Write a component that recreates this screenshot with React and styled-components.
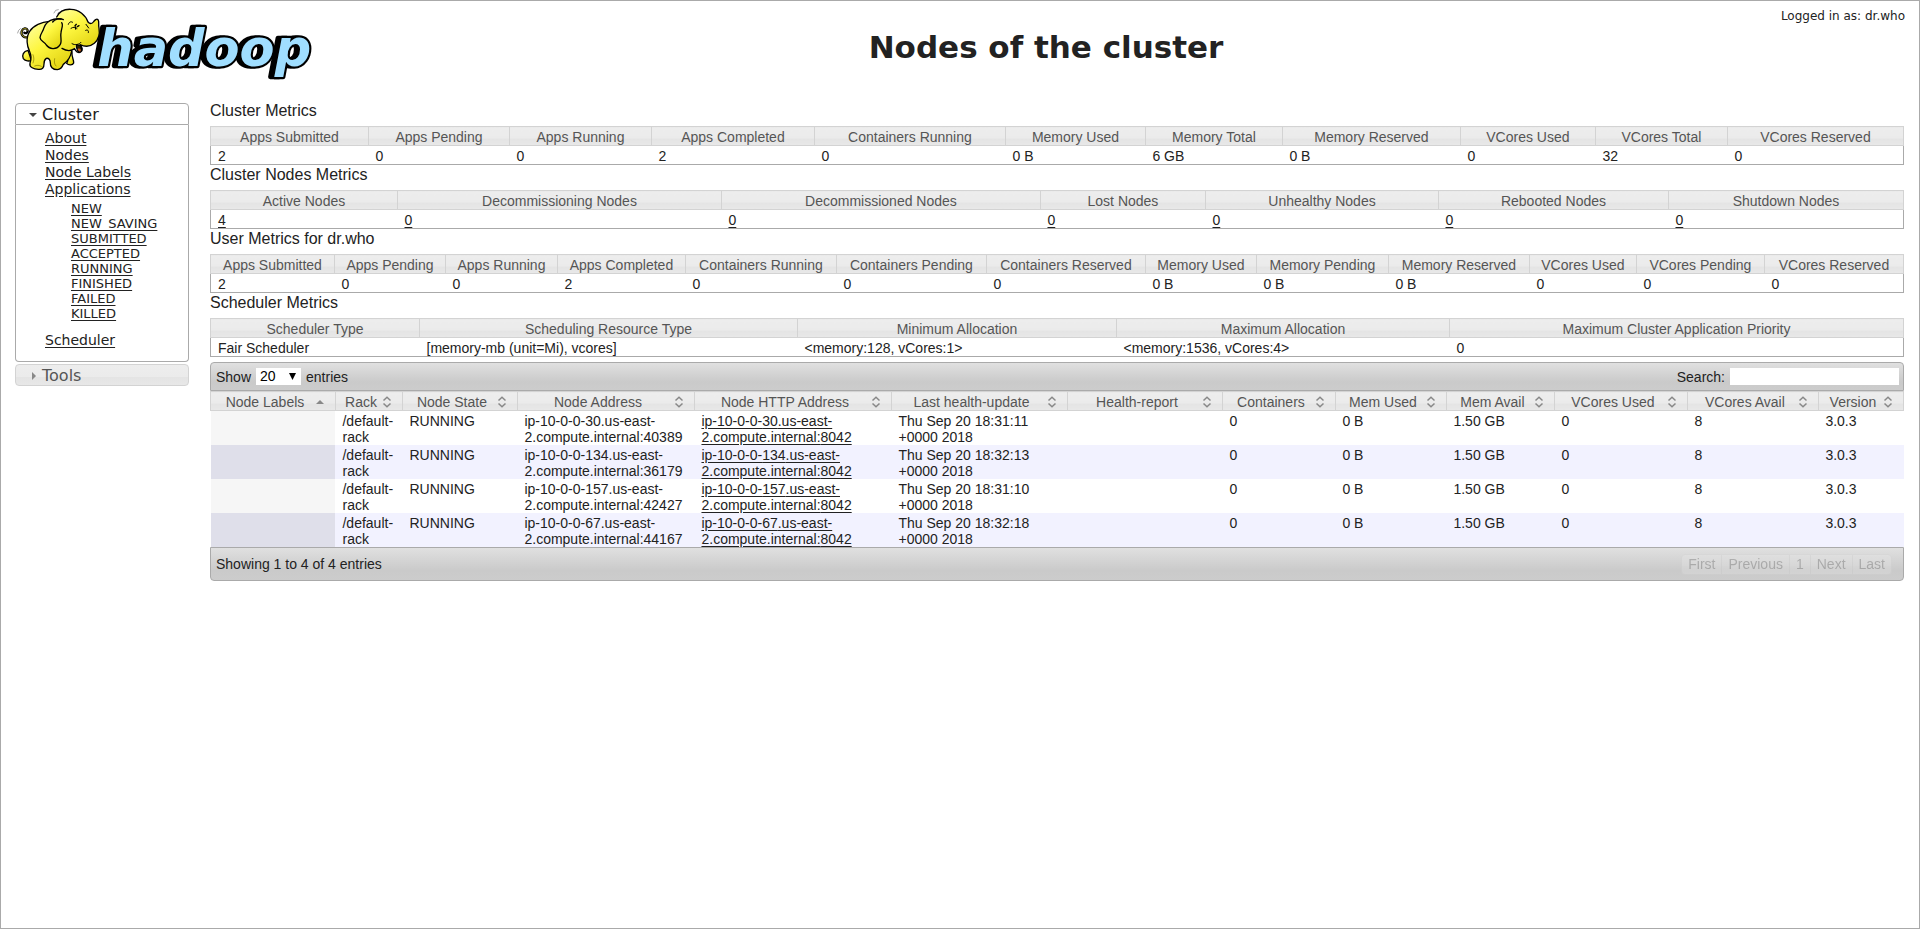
import React from "react";
import styled, { createGlobalStyle, css } from "styled-components";

const sans = `"Liberation Sans", Arial, sans-serif`;
const wide = `"DejaVu Sans", Verdana, sans-serif`;
const glass = "linear-gradient(#ededed 0%, #ebebeb 60%, #e4e4e4 61%, #e8e8e8 100%)";

const GlobalStyle = createGlobalStyle`
  * { box-sizing: border-box; }
  body { margin: 0; background: #fff; color: #222; font-family: ${sans}; font-size: 14px; line-height: 16px; }
  a { color: #222; text-underline-offset: 2px; }
  button, select, input { font: inherit; color: inherit; }
`;

const Page = styled.div`
  min-height: 100vh;
  border: 1px solid #aaa;
`;

const Header = styled.header`
  display: grid;
  grid-template-columns: 172px 1fr;
  padding: 7px 14px 0;
  height: 100px;
`;

const Logo = styled.svg`
  display: block;
  width: 300px;
  height: 76px;
`;

const Wordmark = styled.text`
  font: italic bold 153px ${wide};
  fill: #a0deff;
  stroke: #000;
  stroke-width: 13px;
  stroke-linejoin: round;
  paint-order: stroke;
  filter: drop-shadow(-12px 0 0 #000);
`;

const Banner = styled.div`
  display: flex;
  flex-direction: column;
`;

const LoginNote = styled.div`
  font: 12px/16px ${wide};
  text-align: right;
`;

const Title = styled.h1`
  margin: 4px 0 0;
  text-align: center;
  font: bold 31px/38px ${wide};
`;

const Main = styled.div`
  display: flex;
  align-items: flex-start;
  gap: 21px;
  padding: 0 15px 0 14px;
`;

const Sidebar = styled.nav`
  flex: 0 0 174px;
  padding-top: 2px;
  display: flex;
  flex-direction: column;
  font-family: ${wide};
`;

const SectionButton = styled.button`
  display: flex;
  align-items: center;
  gap: 4px;
  height: 22px;
  padding: 1px 0 0 12px;
  font-size: 16px;
  text-align: left;
  ${(p) =>
    p.$open
      ? css`
          border: 1px solid #aaa;
          border-radius: 4px 4px 0 0;
          background: #fff;
          color: #212121;
        `
      : css`
          margin-top: 2px;
          border: 1px solid #d3d3d3;
          border-radius: 4px;
          background: ${glass};
          color: #555;
        `}
`;

const SectionBody = styled.div`
  border: 1px solid #aaa;
  border-top: 0;
  border-radius: 0 0 4px 4px;
  padding: 5px 0 12px 29px;
`;

const NavList = styled.ul`
  list-style: none;
  margin: 0;
  padding: 0;
  font-size: 14px;
  line-height: 17px;
`;

const StateList = styled(NavList)`
  margin: 3px 0 11px;
  padding-left: 26px;
  font-size: 13px;
  line-height: 15px;
`;

const Content = styled.main`
  flex: 1;
  min-width: 0;
`;

const SectionTitle = styled.h2`
  margin: 0 0 6px;
  font-size: 16px;
  line-height: 19px;
  font-weight: normal;
`;

const Table = styled.table`
  width: 100%;
  table-layout: fixed;
  border-collapse: collapse;
  ${(p) => p.$framed && "border: 1px solid #aaa;"}
`;

const HeadCell = styled.th`
  height: 19px;
  padding: ${(p) => (p.$sortable ? 0 : "2px 0 0")};
  border: 1px solid #d3d3d3;
  background: ${glass};
  color: #555;
  font-weight: normal;
  line-height: 16px;
  white-space: nowrap;
`;

const MetricCell = styled.td`
  height: 19px;
  padding: 2px 7px 0;
  white-space: nowrap;
`;

const NodeCell = styled.td`
  padding: 2px 4px 0 7px;
  height: 34px;
  vertical-align: top;
`;

const NodeRow = styled.tr`
  background: ${(p) => (p.$even ? "#f2f2ff" : "#fff")};
  & > td:first-child {
    background: ${(p) => (p.$even ? "#dfdfea" : "#f6f6f6")};
  }
`;

const SortButton = styled.button`
  display: flex;
  align-items: center;
  width: 100%;
  height: 18px;
  padding: 2px 7px 0 7px;
  border: 0;
  background: none;
  white-space: nowrap;
  line-height: 16px;
`;

const SortLabel = styled.span`
  flex: 1;
  min-width: 0;
  text-align: center;
`;

const SortIcon = styled.svg`
  flex: 0 0 16px;
  height: 12px;
`;

const Bar = styled.div`
  display: flex;
  align-items: center;
  justify-content: space-between;
  border: 1px solid #aaa;
  background: linear-gradient(#e0e0e0, #cacaca 70%, #cccccc);
`;

const Toolbar = styled(Bar)`
  height: 29px;
  margin-top: 5px;
  padding: 0 4px 0 5px;
  border-radius: 4px 4px 0 0;
`;

const Footer = styled(Bar)`
  height: 34px;
  padding: 0 11px 0 5px;
  border-radius: 0 0 4px 4px;
`;

const Field = styled.label`
  display: flex;
  align-items: center;
  gap: 5px;
`;

const SelectBox = styled.span`
  position: relative;
  display: inline-flex;
`;

const Select = styled.select`
  appearance: none;
  width: 45px;
  height: 17px;
  padding: 0 4px;
  border: 0;
  border-radius: 0;
  background: #fff;
  color: #000;
  line-height: 17px;
`;

const SelectArrow = styled.svg`
  position: absolute;
  right: 5px;
  top: 5px;
  width: 7px;
  height: 7px;
  pointer-events: none;
`;

const SearchInput = styled.input`
  width: 169px;
  height: 17px;
  padding: 0 2px;
  border: 0;
`;

const Pager = styled.div`
  display: flex;
  opacity: 0.3;
`;

const PageButton = styled.button`
  height: 21px;
  padding: 0 6px;
  margin-right: -1px;
  border: 1px solid #d3d3d3;
  background: ${glass};
  color: #555;
  &:first-child { border-radius: 4px 0 0 4px; }
  &:last-child { border-radius: 0 4px 4px 0; margin-right: 0; }
`;

const Columns = ({ widths }) => {
  const total = widths.reduce((a, b) => a + b, 0);
  return (
    <colgroup>
      {widths.map((w, i) => (
        <col key={i} style={{ width: `${(w / total) * 100}%` }} />
      ))}
    </colgroup>
  );
};

const metrics = [
  {
    title: "Cluster Metrics",
    widths: [158, 141, 142, 163, 191, 140, 137, 178, 135, 132, 176],
    heads: ["Apps Submitted", "Apps Pending", "Apps Running", "Apps Completed", "Containers Running", "Memory Used", "Memory Total", "Memory Reserved", "VCores Used", "VCores Total", "VCores Reserved"],
    values: ["2", "0", "0", "2", "0", "0 B", "6 GB", "0 B", "0", "32", "0"],
  },
  {
    title: "Cluster Nodes Metrics",
    linked: true,
    widths: [187, 324, 319, 165, 233, 230, 235],
    heads: ["Active Nodes", "Decommissioning Nodes", "Decommissioned Nodes", "Lost Nodes", "Unhealthy Nodes", "Rebooted Nodes", "Shutdown Nodes"],
    values: ["4", "0", "0", "0", "0", "0", "0"],
  },
  {
    title: "User Metrics for dr.who",
    widths: [124, 111, 112, 128, 151, 150, 159, 111, 132, 141, 107, 128, 139],
    heads: ["Apps Submitted", "Apps Pending", "Apps Running", "Apps Completed", "Containers Running", "Containers Pending", "Containers Reserved", "Memory Used", "Memory Pending", "Memory Reserved", "VCores Used", "VCores Pending", "VCores Reserved"],
    values: ["2", "0", "0", "2", "0", "0", "0", "0 B", "0 B", "0 B", "0", "0", "0"],
  },
  {
    title: "Scheduler Metrics",
    widths: [209, 378, 319, 333, 454],
    heads: ["Scheduler Type", "Scheduling Resource Type", "Minimum Allocation", "Maximum Allocation", "Maximum Cluster Application Priority"],
    values: ["Fair Scheduler", "[memory-mb (unit=Mi), vcores]", "<memory:128, vCores:1>", "<memory:1536, vCores:4>", "0"],
  },
];

const nodeHeads = ["Node Labels", "Rack", "Node State", "Node Address", "Node HTTP Address", "Last health-update", "Health-report", "Containers", "Mem Used", "Mem Avail", "VCores Used", "VCores Avail", "Version"];
const nodeWidths = [125, 67, 115, 177, 197, 176, 155, 113, 111, 108, 133, 131, 85];

const nodes = [
  { ip: "30", port: "40389", time: "18:31:11" },
  { ip: "134", port: "36179", time: "18:32:13" },
  { ip: "157", port: "42427", time: "18:31:10" },
  { ip: "67", port: "44167", time: "18:32:18" },
];

const states = ["NEW", "NEW_SAVING", "SUBMITTED", "ACCEPTED", "RUNNING", "FINISHED", "FAILED", "KILLED"];

const Host = ({ ip, port }) => (
  <>
    ip-10-0-0-{ip}.us-east-
    <wbr />
    2.compute.internal:{port}
  </>
);

const HadoopLogo = () => (
  <Logo viewBox="45 24 900 228" role="img" aria-label="hadoop">
    <defs>
      <linearGradient id="hide" x1="0" y1="0" x2="0.7" y2="1">
        <stop offset="0" stopColor="#ffffa8" />
        <stop offset="0.5" stopColor="#fdf63f" />
        <stop offset="1" stopColor="#e2d312" />
      </linearGradient>
    </defs>
    <Wordmark x="292" y="197">hadoop</Wordmark>
    <g fill="url(#hide)" stroke="#000" strokeWidth="4" strokeLinecap="round" strokeLinejoin="round">
      <path d="M84 111C72 115 62 105 65 94C68 84 80 82 83 91C84 98 78 101 73 98" fill="none" strokeWidth="7" />
      <path d="M84 111C72 115 62 105 65 94C68 84 80 82 83 91" fill="none" stroke="#e8dc28" strokeWidth="2" />
      <path d="M84 151C70 154 65 166 70 176C76 184 88 184 94 181Z" />
      <path d="M200 176C207 180 202 186 200 190C206 197 218 196 221 189C222 178 214 172 216 155Z" />
      <path d="M148 64C125 66 100 77 89 94C76 114 82 140 88 152C94 165 95 176 90 190C87 202 102 207 115 208C127 209 132 204 132 192C132 184 134 178 139 175C146 174 151 179 151 188C150 200 158 209 172 209C184 208 187 201 190 193C200 186 212 172 215 153L210 80Z" />
      <path d="M227 133C230 140 229 151 237 156C246 156 249 147 241 136Z" fill="#2a1c00" />
      <path d="M170 51C178 34 196 27 213 28C237 29 257 45 264 66C269 72 276 72 280 66C284 60 290 55 294 59C299 67 294 73 297 84C300 103 297 118 283 130C270 141 253 140 240 134L228 131C228 138 227 143 224 146C214 153 199 153 186 145L160 90Z" stroke="none" />
      <path d="M170 51C178 34 196 27 213 28C237 29 257 45 264 66C269 72 276 72 280 66C284 60 290 55 294 59C299 67 294 73 297 84C300 103 297 118 283 130C270 141 253 140 240 134C246 143 250 151 242 156C235 161 226 153 224 146C214 153 199 153 186 145" fill="none" />
      <path d="M233 147C238 144 244 147 242 153C239 157 235 153 233 147Z" fill="#cb5d20" stroke="none" />
      <path d="M183 57C160 53 139 64 132 83C130 94 120 102 120 113C122 125 133 124 139 135C148 148 169 150 179 136C188 127 180 112 183 98C184 87 191 74 185 68" />
      <path d="M158 66C164 58 177 53 190 59" fill="none" />
      <path d="M205 73C207 66 213 63 218 67M213 85C219 81 226 80 231 85" fill="none" strokeWidth="3" />
      <path d="M225 77L229 73M232 80L237 77M227 87L226 81" strokeWidth="4" />
      <path d="M258 73L266 84M257 91C263 88 267 92 265 98M216 131C225 137 239 133 243 127" fill="none" strokeWidth="3" />
      <path d="M99 164C103 174 102 181 99 189M164 176C162 186 163 193 168 198M104 198C110 195 118 195 124 199" fill="none" strokeWidth="2" stroke="#857800" />
      <path d="M162 39L167 31L175 29M173 40L177 36M53 99L56 91L61 86M60 100L62 94" fill="none" strokeWidth="2" stroke="#777" />
    </g>
  </Logo>
);

const App = () => (
  <Page>
    <GlobalStyle />
    <Header>
      <HadoopLogo />
      <Banner>
        <LoginNote>Logged in as: dr.who</LoginNote>
        <Title>Nodes of the cluster</Title>
      </Banner>
    </Header>
    <Main>
      <Sidebar aria-label="Cluster">
        <SectionButton $open type="button" aria-expanded="true">
          <svg width="10" height="8" viewBox="0 0 10 8" aria-hidden="true"><path d="M1 2h8L5 6z" fill="#444" /></svg>
          Cluster
        </SectionButton>
        <SectionBody>
          <NavList>
            <li><a href="#about">About</a></li>
            <li><a href="#nodes">Nodes</a></li>
            <li><a href="#labels">Node Labels</a></li>
            <li>
              <a href="#apps">Applications</a>
              <StateList>
                {states.map((s) => (
                  <li key={s}><a href={`#${s}`}>{s}</a></li>
                ))}
              </StateList>
            </li>
            <li><a href="#scheduler">Scheduler</a></li>
          </NavList>
        </SectionBody>
        <SectionButton type="button" aria-expanded="false">
          <svg width="10" height="8" viewBox="0 0 10 8" aria-hidden="true"><path d="M4 0v8l4-4z" fill="#888" /></svg>
          Tools
        </SectionButton>
      </Sidebar>
      <Content>
        {metrics.map((m) => (
          <section key={m.title}>
            <SectionTitle>{m.title}</SectionTitle>
            <Table $framed>
              <Columns widths={m.widths} />
              <thead>
                <tr>{m.heads.map((h) => <HeadCell key={h} scope="col">{h}</HeadCell>)}</tr>
              </thead>
              <tbody>
                <tr>
                  {m.values.map((v, i) => (
                    <MetricCell key={i}>{m.linked ? <a href="#nodes">{v}</a> : v}</MetricCell>
                  ))}
                </tr>
              </tbody>
            </Table>
          </section>
        ))}
        <Toolbar>
          <Field>
            Show
            <SelectBox>
              <Select defaultValue="20">
                <option>20</option>
                <option>40</option>
                <option>60</option>
              </Select>
              <SelectArrow viewBox="0 0 7 7" aria-hidden="true"><path d="M0 0h7L3.5 7z" fill="#000" /></SelectArrow>
            </SelectBox>
            entries
          </Field>
          <Field>
            Search:
            <SearchInput type="text" />
          </Field>
        </Toolbar>
        <Table>
          <Columns widths={nodeWidths} />
          <thead>
            <tr>
              {nodeHeads.map((h, i) => (
                <HeadCell key={h} $sortable scope="col" aria-sort={i ? "none" : "ascending"}>
                  <SortButton type="button">
                    <SortLabel>{h}</SortLabel>
                    <SortIcon viewBox="0 0 16 12" aria-hidden="true">
                      {i ? (
                        <path d="M4.500 4.500L8 1.200L11.500 4.500M4.500 7.500L8 10.800L11.500 7.500" fill="none" stroke="#888" strokeWidth="1.500" />
                      ) : (
                        <path d="M4 8h8L8 4z" fill="#888" />
                      )}
                    </SortIcon>
                  </SortButton>
                </HeadCell>
              ))}
            </tr>
          </thead>
          <tbody>
            {nodes.map((n, i) => (
              <NodeRow key={n.ip} $even={i % 2 === 1}>
                <NodeCell />
                <NodeCell>/default-<wbr />rack</NodeCell>
                <NodeCell>RUNNING</NodeCell>
                <NodeCell><Host ip={n.ip} port={n.port} /></NodeCell>
                <NodeCell><a href="#node"><Host ip={n.ip} port="8042" /></a></NodeCell>
                <NodeCell>Thu Sep 20 {n.time} +0000 2018</NodeCell>
                <NodeCell />
                <NodeCell>0</NodeCell>
                <NodeCell>0 B</NodeCell>
                <NodeCell>1.50 GB</NodeCell>
                <NodeCell>0</NodeCell>
                <NodeCell>8</NodeCell>
                <NodeCell>3.0.3</NodeCell>
              </NodeRow>
            ))}
          </tbody>
        </Table>
        <Footer>
          <span>Showing 1 to 4 of 4 entries</span>
          <Pager>
            {["First", "Previous", "1", "Next", "Last"].map((p) => (
              <PageButton key={p} type="button">{p}</PageButton>
            ))}
          </Pager>
        </Footer>
      </Content>
    </Main>
  </Page>
);

export default App;
